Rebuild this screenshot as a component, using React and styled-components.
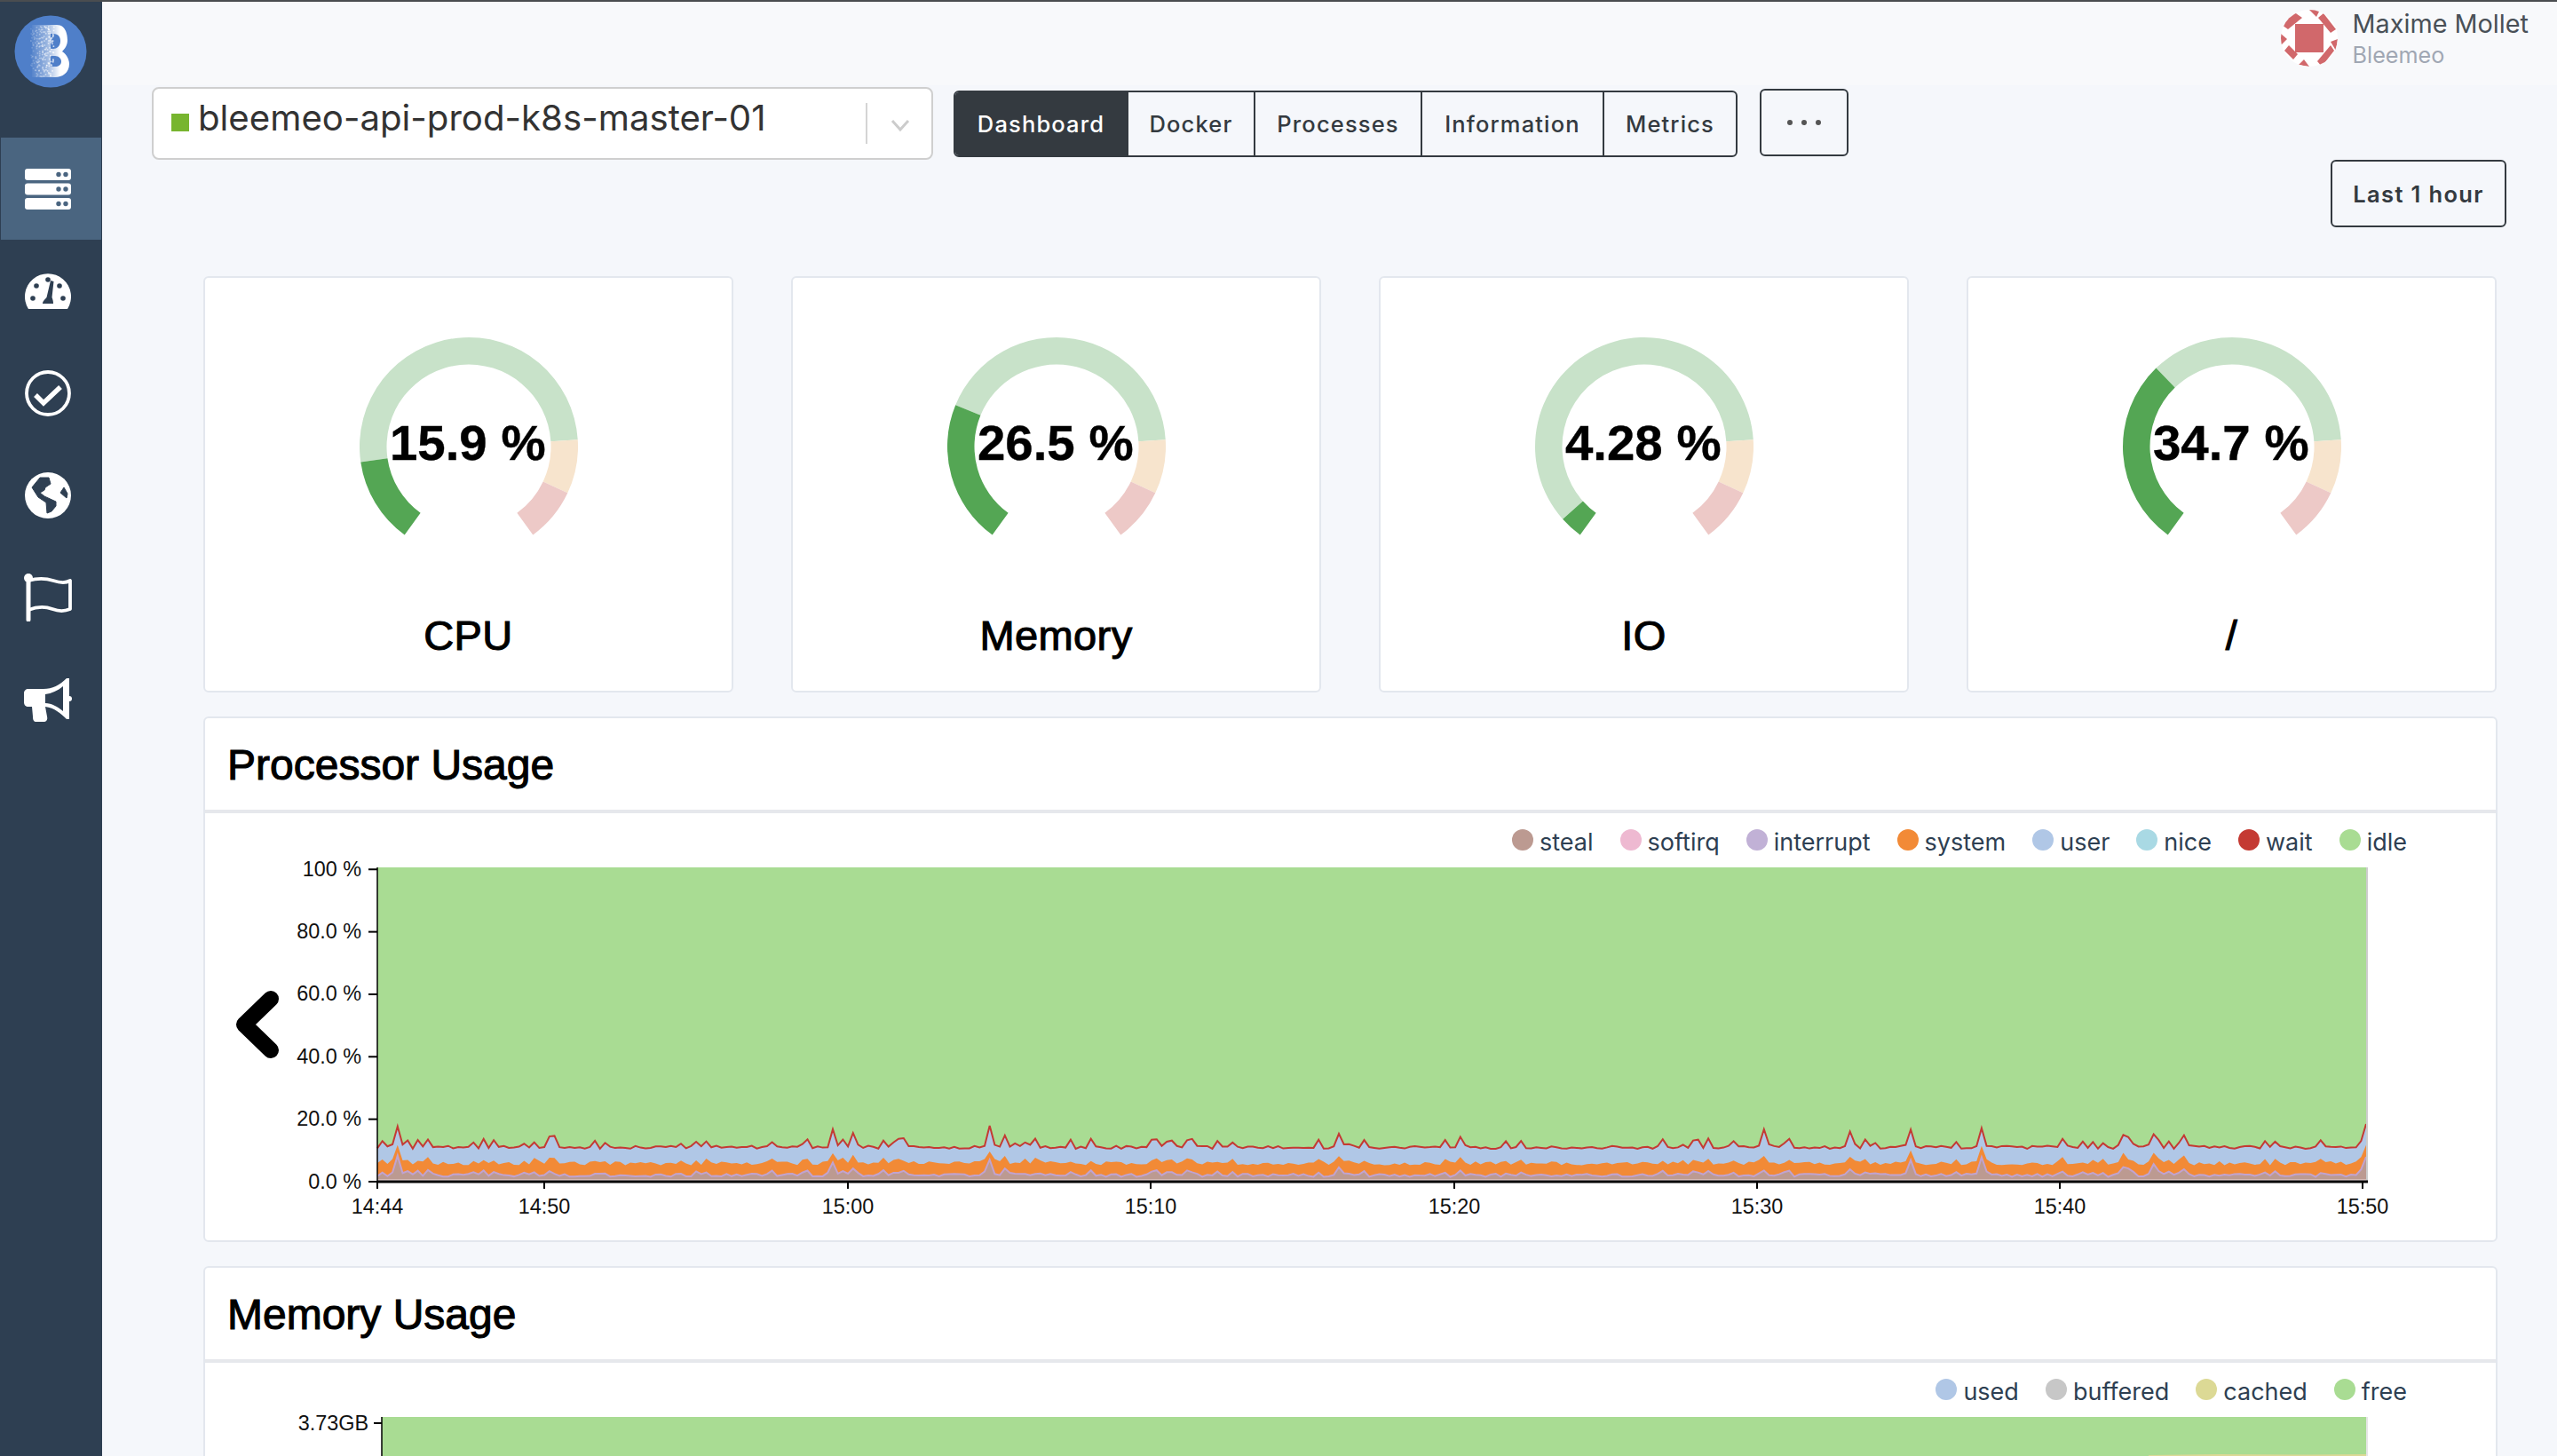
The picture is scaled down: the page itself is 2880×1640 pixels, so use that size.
import React, { useMemo } from 'react';
import styled, { createGlobalStyle } from 'styled-components';

const Global = createGlobalStyle`
  html, body { margin: 0; padding: 0; background: #f5f7fb; }
  * { box-sizing: border-box; }
  body { font-family: Inter, "Liberation Sans", sans-serif; }
`;

const Page = styled.div`
  width: 2880px; height: 1640px; overflow: hidden; display: flex;
  border-top: 2px solid #4a4d50; background: #f5f7fb;
`;
const Sidebar = styled.nav`
  width: 115px; flex: none; background: #2e3f52; display: flex; flex-direction: column;
`;
const LogoSlot = styled.div`
  height: 153px; padding: 15px 0 0 16px;
`;
const NavItem = styled.div`
  height: 115px; margin: 0 1px; padding-right: 7px; display: flex; align-items: center; justify-content: center;
  background: ${p => (p.$active ? '#4a6580' : 'transparent')};
`;
const Main = styled.main`
  flex: 1; min-width: 0; display: flex; flex-direction: column;
`;
const Header = styled.header`
  height: 94px; flex: none; background: #f8f9fb; display: flex; justify-content: flex-end; align-items: flex-start;
  padding: 9px 32px 0 0; gap: 17px;
`;
const AvatarSvg = styled.svg`
  width: 64px; height: 64px; display: block;
`;
const UserBlock = styled.div`
  display: flex; flex-direction: column;
`;
const UserName = styled.div`
  font: 400 28.8px/32px Inter, sans-serif; color: #495057; white-space: nowrap;
`;
const UserOrg = styled.div`
  font: 400 25.2px/32px Inter, sans-serif; color: #a0a7b3; margin-top: 3px;
`;
const Toolbar = styled.div`
  display: flex; align-items: flex-start; padding: 2px 0 0 56px; height: 84px; flex: none;
`;
const HostSelect = styled.div`
  width: 880px; height: 82px; background: #fff; border: 2px solid #cfcfcf; border-radius: 8px;
  display: flex; align-items: center; padding-left: 20px;
`;
const StatusSquare = styled.span`
  width: 20px; height: 20px; background: #77b52f; flex: none; margin-right: 10px; margin-top: -2px;
`;
const HostName = styled.span`
  flex: 1; font: 400 40.2px/1 Inter, sans-serif; color: #333; white-space: nowrap; margin-top: -11px;
`;
const SelectDivider = styled.span`
  width: 2px; height: 46px; background: #d4d4d4; flex: none;
`;
const SelectArrow = styled.svg`
  width: 72px; height: 26px; flex: none; margin-top: 6px;
`;
const Tabs = styled.div`
  display: flex; margin: 4px 0 0 23px; height: 75px; border: 2px solid #343a40; border-radius: 6px; overflow: hidden; width: 883px;
`;
const Tab = styled.div`
  width: ${p => p.$w}px; display: flex; align-items: center; justify-content: center; padding-top: 1px;
  font: 500 25.5px/1 Inter, sans-serif; letter-spacing: 1.15px;
  color: ${p => (p.$active ? '#fff' : '#343a40')};
  background: ${p => (p.$active ? '#343a40' : 'transparent')};
  border-left: ${p => (p.$first ? '0' : '2px solid #343a40')};
`;
const MoreButton = styled.div`
  width: 100px; height: 76px; margin: 2px 0 0 25px; border: 2px solid #343a40; border-radius: 6px;
  display: flex; align-items: center; justify-content: center; gap: 10px;
`;
const Dot = styled.span`
  width: 6px; height: 6px; border-radius: 50%; background: #555;
`;
const TimeRow = styled.div`
  display: flex; justify-content: flex-end; padding-right: 57px; flex: none;
`;
const TimeButton = styled.div`
  width: 198px; height: 76px; border: 2px solid #343a40; border-radius: 6px;
  display: flex; align-items: center; justify-content: center; padding-top: 1px;
  font: 600 25.5px/1 Inter, sans-serif; letter-spacing: 1.35px; color: #343a40;
`;
const Content = styled.div`
  padding: 55px 67px 0 114px; display: flex; flex-direction: column; gap: 27px;
`;
const GaugeGrid = styled.div`
  display: grid; grid-template-columns: repeat(4, 597px); column-gap: 65px;
`;
const Card = styled.section`
  background: #fff; border: 2px solid #e3e7ee; border-radius: 6px;
`;
const GaugeCard = styled(Card)`
  height: 469px; display: flex; flex-direction: column; align-items: center; padding-top: 65px;
`;
const GaugeWrap = styled.div`
  position: relative; width: 250px; height: 250px;
`;
const GaugeValue = styled.div`
  position: absolute; left: 49.7%; top: 121px; transform: translate(-50%, -50%);
  font: 700 56.4px/1 "Liberation Sans", sans-serif; color: #000; white-space: nowrap;
  -webkit-text-stroke: 0.4px #000;
`;
const GaugeLabel = styled.div`
  margin-top: 58px; font: 400 47px/60px "Liberation Sans", sans-serif; letter-spacing: 0.4px; color: #000;
  -webkit-text-stroke: 1.1px #000;
`;
const PanelHeader = styled.div`
  height: 107px; border-bottom: 4px solid #e6e8ec; padding: 2px 0 0 25px; display: flex; align-items: center;
  font: 400 48px/1 "Liberation Sans", sans-serif; color: #000; -webkit-text-stroke: 1.1px #000;
`;
const PanelBody = styled.div`
  position: relative;
`;
const Legend = styled.div`
  height: 60px; display: flex; justify-content: flex-end; align-items: center; gap: 30px; padding: 5.5px 100px 0 0;
`;
const LegendItem = styled.div`
  display: flex; align-items: center; gap: 7px; font: 400 27px/1 Inter, sans-serif; color: #2e3f52;
`;
const LegendDot = styled.span`
  width: 24px; height: 24px; border-radius: 50%; background: ${p => p.$c}; flex: none; margin-top: -6px;
`;
const ChartSvg = styled.svg`
  display: block; width: 2578px; overflow: visible;
`;
const AxisText = styled.text`
  font: 400 23.4px "Liberation Sans", sans-serif; fill: #111;
`;
const BackChevron = styled.svg`
  position: absolute; left: 34px; top: 200px; width: 52px; height: 80px;
`;

const BG = '#2e3f52';

function rng(seed) {
  let a = seed;
  return () => {
    a |= 0; a = (a + 0x6d2b79f5) | 0;
    let t = Math.imul(a ^ (a >>> 15), 1 | a);
    t = (t + Math.imul(t ^ (t >>> 7), 61 | t)) ^ t;
    return ((t ^ (t >>> 14)) >>> 0) / 4294967296;
  };
}

const sector = (cx, cy, R, r, a0, a1) => {
  const p = (rad, a) => [cx + rad * Math.cos(a), cy + rad * Math.sin(a)];
  const [x0, y0] = p(R, a0), [x1, y1] = p(R, a1), [x2, y2] = p(r, a1), [x3, y3] = p(r, a0);
  const large = a1 - a0 > Math.PI ? 1 : 0;
  return `M${x0} ${y0}A${R} ${R} 0 ${large} 1 ${x1} ${y1}L${x2} ${y2}A${r} ${r} 0 ${large} 0 ${x3} ${y3}Z`;
};

function GaugeArc({ value }) {
  const start = (126 * Math.PI) / 180;
  const sweep = (288 * Math.PI) / 180;
  const at = f => start + sweep * f;
  const s = (a, b) => sector(125, 125, 123, 92.5, at(a), at(b));
  const v = value / 100;
  return (
    <svg width="250" height="250" viewBox="0 0 250 250">
      <path d={s(v, 0.8)} fill="#c8e2c9" />
      <path d={s(0.8, 0.9)} fill="#f7e4cd" />
      <path d={s(0.9, 1)} fill="#edc9c7" />
      <path d={s(0, v)} fill="#54a654" />
    </svg>
  );
}

const GAUGES = [['15.9 %', 15.9, 'CPU'], ['26.5 %', 26.5, 'Memory'], ['4.28 %', 4.28, 'IO'], ['34.7 %', 34.7, '/']];
const CPU_LEGEND = [['steal', '#bc9a91'], ['softirq', '#eeb9d1'], ['interrupt', '#c1b1d6'], ['system', '#f28a36'], ['user', '#b0c7e6'], ['nice', '#a9d9e4'], ['wait', '#c43a33'], ['idle', '#a9dc93']];
const MEM_LEGEND = [['used', '#b0c7e6'], ['buffered', '#c7c7c7'], ['cached', '#dcd995'], ['free', '#a9dc93']];
const SPIKES = [[447, 19, 18, 20], [481, 8, 5, 4], [601, 6, 4, 3], [623, 11, 6, 3], [937, 10, 8, 10], [959, 14, 8, 8], [1113, 20, 14, 15], [1130, 10, 6, 6], [1168, 8, 5, 3], [1506, 10, 5, 6], [1647, 10, 6, 5], [1984, 18, 8, 6], [2085, 14, 6, 6], [2154, 17, 13, 15], [2234, 19, 18, 17], [2325, 8, 5, 4], [2393, 12, 9, 9], [2427, 11, 9, 10], [2461, 10, 6, 6], [2665, 16, 14, 14]];

function buildSeries() {
  const r = rng(17);
  const x0 = 425, step = 5.7, base = 1331;
  const n = Math.ceil((2665 - x0) / step) + 1;
  const red = [], org = [], pur = [], xs = [];
  for (let i = 0; i < n; i++) {
    xs.push(Math.min(x0 + i * step, 2665));
    const bump = r() < 0.18 ? 4 + r() * 5 : 0;
    red.push(37 + r() * 3.5 + bump);
    org.push(18.5 + r() * 4.5 + bump * 0.5);
    pur.push(5.5 + r() * 3.5 + bump * 0.5);
  }
  SPIKES.forEach(([x, a, b, c]) => {
    const i = Math.min(n - 1, Math.round((x - x0) / step));
    red[i] += a * 1.2; org[i] += b * 1.1; pur[i] += c * 1.1;
    [i - 1, i + 1].forEach(j => {
      if (j >= 0 && j < n) { red[j] += a * 0.15; org[j] += b * 0.2; pur[j] += c * 0.2; }
    });
  });
  const line = h => h.map((v, i) => `${i ? 'L' : 'M'}${xs[i].toFixed(1)} ${(base - v).toFixed(1)}`).join('');
  const area = h => `${line(h)}L2665 ${base}L${x0} ${base}Z`;
  return { redLine: line(red), redArea: area(red), orgArea: area(org), purLine: line(pur), purArea: area(pur) };
}

function CpuChart() {
  const s = useMemo(buildSeries, []);
  const yTicks = ['0.0 %', '20.0 %', '40.0 %', '60.0 %', '80.0 %', '100 %'];
  const xTicks = [[425, '14:44'], [613, '14:50'], [955, '15:00'], [1296, '15:10'], [1638, '15:20'], [1979, '15:30'], [2320, '15:40'], [2661, '15:50']];
  return (
    <ChartSvg height="421" viewBox="231 976 2578 421">
      <rect x="425" y="977" width="2240" height="354" fill="#a9dc93" />
      <path d={s.redArea} fill="#b0c7e6" />
      <path d={s.orgArea} fill="#f28a36" />
      <path d={s.purArea} fill="#bc9a91" />
      <path d={s.purLine} fill="none" stroke="#c1a3cf" strokeWidth="2" />
      <path d={s.redLine} fill="none" stroke="#c43a33" strokeWidth="2" />
      <rect x="425" y="1328.5" width="2240" height="1.5" fill="#efdcdc" />
      <line x1="2666" y1="977" x2="2666" y2="1331" stroke="#ccc" strokeWidth="2" />
      <line x1="425" y1="977" x2="425" y2="1339" stroke="#000" strokeWidth="1.5" />
      <line x1="425" y1="1331" x2="2667" y2="1331" stroke="#000" strokeWidth="3" />
      {yTicks.map((t, i) => {
        const y = 1331 - 70.35 * i;
        return (
          <g key={t}>
            <line x1="415" y1={y} x2="425" y2={y} stroke="#000" strokeWidth="2" />
            <AxisText x="407" y={y + 7.5} textAnchor="end">{t}</AxisText>
          </g>
        );
      })}
      {xTicks.map(([x, t]) => (
        <g key={t}>
          <line x1={x} y1="1331" x2={x} y2="1339" stroke="#000" strokeWidth="2" />
          <AxisText x={x} y="1367" textAnchor="middle">{t}</AxisText>
        </g>
      ))}
    </ChartSvg>
  );
}

function MemChart() {
  return (
    <ChartSvg height="100" viewBox="231 1596 2578 100">
      <rect x="430" y="1597" width="2235" height="100" fill="#a9dc93" />
      <path d="M2420 1640L2500 1639L2600 1639.5L2665 1639V1700H2420Z" fill="#dcd995" />
      <line x1="2666" y1="1597" x2="2666" y2="1700" stroke="#ddd" strokeWidth="1.5" />
      <line x1="430" y1="1597" x2="430" y2="1700" stroke="#000" strokeWidth="1.5" />
      <line x1="421" y1="1604" x2="430" y2="1604" stroke="#000" strokeWidth="2" />
      <AxisText x="415" y="1611.5" textAnchor="end">3.73GB</AxisText>
    </ChartSvg>
  );
}

const SPECKS = (() => {
  const r = rng(5);
  const out = [];
  for (let i = 0; i < 190; i++) {
    const x = 18 + r() * 26;
    const y = 12 + r() * 57;
    out.push([x.toFixed(1), y.toFixed(1), (0.15 + ((x - 18) / 26) * 0.6).toFixed(2)]);
  }
  return out;
})();

const Logo = () => (
  <svg width="82" height="82" viewBox="0 0 82 82" style={{ display: 'block' }}>
    <defs>
      <linearGradient id="bfade" x1="18" x2="58" y1="0" y2="0" gradientUnits="userSpaceOnUse">
        <stop offset="0" stopColor="#fff" stopOpacity="0" />
        <stop offset="0.45" stopColor="#fff" stopOpacity="0.4" />
        <stop offset="0.85" stopColor="#fff" stopOpacity="1" />
      </linearGradient>
    </defs>
    <circle cx="41" cy="41" r="40.5" fill="#4f7fc9" />
    <path
      fillRule="evenodd"
      fill="url(#bfade)"
      d="M20 11H48C58 11 60 22 60 28C60 34 57 38 54 41C59 44 62 50 62 55C62 65 54 70 46 70H20ZM41 21V38H44C48 38 52 35 52 29C52 25 50 21 44 21ZM41 46V58H46C50 58 53 56 53 52C53 49 50 46 46 46Z"
    />
    {SPECKS.map(([x, y, o], i) => (
      <rect key={i} x={x} y={y} width="1.6" height="1.6" fill="#fff" opacity={o} />
    ))}
  </svg>
);

const ServerIcon = () => (
  <svg width="52" height="46" viewBox="0 0 52 46">
    {[0, 16.5, 33].map(y => (
      <g key={y}>
        <rect x="0" y={y} width="52" height="13" rx="3" fill="#fff" />
        <circle cx="38" cy={y + 6.5} r="2.7" fill="#4a6580" />
        <circle cx="46" cy={y + 6.5} r="2.7" fill="#4a6580" />
      </g>
    ))}
  </svg>
);
const GaugeIcon = () => (
  <svg width="52" height="42" viewBox="0 0 52 42">
    <path d="M4 41A26 26 0 1 1 48 41Z" fill="#fff" />
    {[[13, 15], [26, 8], [39, 15], [9, 29], [43, 29]].map(([x, y]) => (
      <circle key={x} cx={x} cy={y} r="2.8" fill={BG} />
    ))}
    <path d="M20 35C20 32 23 30 24.5 28L29 9L32.5 10L30.5 28C31.5 30 32 33 32 35Z" fill={BG} />
  </svg>
);
const CheckIcon = () => (
  <svg width="52" height="52" viewBox="0 0 52 52">
    <circle cx="26" cy="26" r="24" fill="none" stroke="#fff" strokeWidth="3.8" />
    <path d="M12 28L21 37L40 19" fill="none" stroke="#fff" strokeWidth="5.5" />
  </svg>
);
const GlobeIcon = () => (
  <svg width="52" height="52" viewBox="0 0 52 52">
    <circle cx="26" cy="26" r="26" fill="#fff" />
    <path
      d="M8 17L17 6L27 6L29 13L23 17L22 20L17 23L22 27L35 33L35 38L30 44L25 46L24 34L15 28Z"
      fill={BG} stroke={BG} strokeWidth="1" strokeLinejoin="round"
    />
    <path d="M44 17L40 23L47 29L48 24Z" fill={BG} stroke={BG} strokeLinejoin="round" />
  </svg>
);
const FlagIcon = () => (
  <svg width="54" height="54" viewBox="0 0 54 54">
    <line x1="5" y1="5" x2="5" y2="52" stroke="#fff" strokeWidth="5" strokeLinecap="round" />
    <circle cx="5" cy="5" r="5" fill="#fff" />
    <path d="M5 8C15 5 24 5 33 8C42 11 47 11 52 8V40C45 43 40 43 32 40C24 37 15 37 5 41" fill="none" stroke="#fff" strokeWidth="3.8" strokeLinejoin="round" />
  </svg>
);
const MegaphoneIcon = () => (
  <svg width="54" height="50" viewBox="0 0 54 50">
    <path
      fillRule="evenodd"
      fill="#fff"
      d="M5 13H22C32 13 40 9 48 1H51V47H48C42 41 34 34 24 33L26 44C27 48 25 50 22 50H14C11 50 10 48 10 44L9 33H5C2 33 0 31 0 28V18C0 15 2 13 5 13ZM24 19V29C31 29 38 33 44 38V10C38 15 31 18 24 19Z"
    />
    <circle cx="51" cy="24" r="3" fill="#fff" />
  </svg>
);

const Avatar = () => (
  <AvatarSvg viewBox="0 0 64 64">
    <defs>
      <clipPath id="avc"><circle cx="32" cy="32" r="32" /></clipPath>
    </defs>
    <g clipPath="url(#avc)">
      <rect width="64" height="64" fill="#fff" />
      <rect x="16" y="16" width="32" height="32" fill="#d1686b" />
      {[
        '1,17 14,2 24,9 8,22', '32,0 44,0 40,8', '48,4 62,22 56,26 42,9', '56,36 64,33 62,46',
        '41,58 56,40 60,46 46,64', '20,62 26,56 32,64', '4,46 9,40 19,50 14,56', '0,27 7,33 0,40',
      ].map(p => <polygon key={p} points={p} fill="#d1686b" />)}
    </g>
  </AvatarSvg>
);

const TABS = [['Dashboard', 193], ['Docker', 143], ['Processes', 188], ['Information', 205], ['Metrics', 150]];
const NAV = [ServerIcon, GaugeIcon, CheckIcon, GlobeIcon, FlagIcon, MegaphoneIcon];

const Legends = ({ items }) => (
  <Legend>
    {items.map(([t, c]) => (
      <LegendItem key={t}><LegendDot $c={c} />{t}</LegendItem>
    ))}
  </Legend>
);

export default function App() {
  return (
    <>
      <Global />
      <Page>
        <Sidebar>
          <LogoSlot><Logo /></LogoSlot>
          {NAV.map((Icon, i) => (
            <NavItem key={i} $active={i === 0}><Icon /></NavItem>
          ))}
        </Sidebar>
        <Main>
          <Header>
            <Avatar />
            <UserBlock>
              <UserName>Maxime Mollet</UserName>
              <UserOrg>Bleemeo</UserOrg>
            </UserBlock>
          </Header>
          <Toolbar>
            <HostSelect>
              <StatusSquare />
              <HostName>bleemeo-api-prod-k8s-master-01</HostName>
              <SelectDivider />
              <SelectArrow viewBox="0 0 72 26">
                <path d="M28 7L37 17L46 7" fill="none" stroke="#ccc" strokeWidth="3" />
              </SelectArrow>
            </HostSelect>
            <Tabs>
              {TABS.map(([t, w], i) => (
                <Tab key={t} $w={w} $active={i === 0} $first={i === 0}>{t}</Tab>
              ))}
            </Tabs>
            <MoreButton><Dot /><Dot /><Dot /></MoreButton>
          </Toolbar>
          <TimeRow><TimeButton>Last 1 hour</TimeButton></TimeRow>
          <Content>
            <GaugeGrid>
              {GAUGES.map(([text, v, label]) => (
                <GaugeCard key={label}>
                  <GaugeWrap>
                    <GaugeArc value={v} />
                    <GaugeValue>{text}</GaugeValue>
                  </GaugeWrap>
                  <GaugeLabel>{label}</GaugeLabel>
                </GaugeCard>
              ))}
            </GaugeGrid>
            <Card>
              <PanelHeader>Processor Usage</PanelHeader>
              <PanelBody>
                <Legends items={CPU_LEGEND} />
                <CpuChart />
                <BackChevron viewBox="0 0 52 80">
                  <path d="M40 9L10 38L40 67" fill="none" stroke="#000" strokeWidth="18" strokeLinecap="round" strokeLinejoin="round" />
                </BackChevron>
              </PanelBody>
            </Card>
            <Card>
              <PanelHeader>Memory Usage</PanelHeader>
              <PanelBody>
                <Legends items={MEM_LEGEND} />
                <MemChart />
              </PanelBody>
            </Card>
          </Content>
        </Main>
      </Page>
    </>
  );
}
